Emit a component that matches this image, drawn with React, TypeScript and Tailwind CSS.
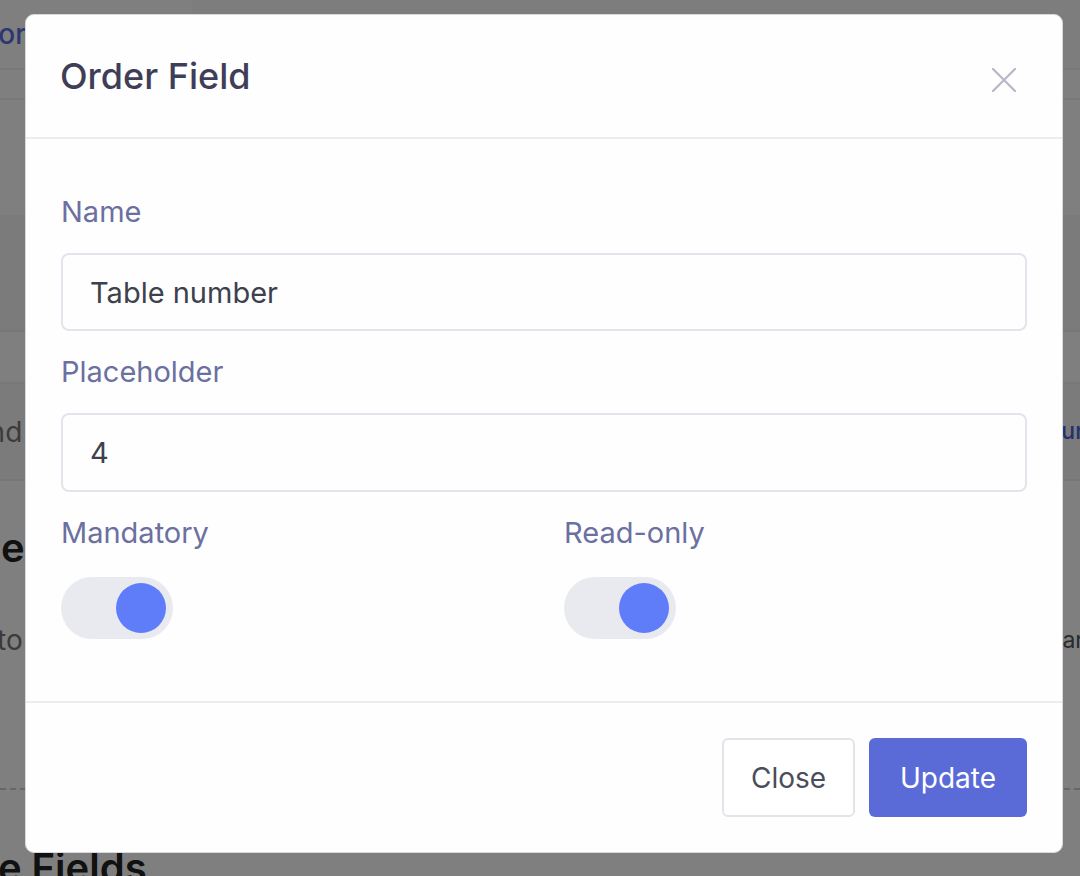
import React, { useState } from "react";

const font = "font-['Inter','Noto_Sans',sans-serif]";

interface ToggleProps {
  label: string;
  checked: boolean;
  onChange: (v: boolean) => void;
}

const Toggle: React.FC<ToggleProps> = ({ label, checked, onChange }) => {
  return (
    <div className="flex flex-col">
      <label className="text-[29px] leading-[42px] text-[#6b70a0]">{label}</label>
      <button
        type="button"
        onClick={() => onChange(!checked)}
        className={`mt-[23px] flex h-[62px] w-[112px] items-center rounded-full bg-[#e9eaf0] px-[7px] ${
          checked ? "justify-end" : "justify-start"
        }`}
      >
        <span className="block h-[50px] w-[50px] rounded-full bg-[#5f7cf9]" />
      </button>
    </div>
  );
};

// the page sitting behind the backdrop, only its edges show
const BackgroundPage: React.FC = () => {
  return (
    <div className="flex h-[876px] flex-col bg-white text-[#333]">
      <div className="flex h-[70px] border-b-2 border-[#f0f0f0] bg-[#fafafa]">
        <div className="flex w-[192px] items-center justify-end bg-white pr-[166px]">
          <span className="whitespace-nowrap text-[28px] font-medium text-[#5a6fe0]">Vendor</span>
        </div>
      </div>
      <div className="h-[30px] border-b-2 border-[#f0f0f0]" />
      <div className="h-[115px]" />
      <div className="h-[117px] border-b-2 border-[#eeeeee] bg-[#f6f6f6]" />
      <div className="h-[52px] border-b-2 border-[#f0f0f0]" />
      <div className="flex h-[97px] items-center justify-between border-b-2 border-[#eeeeee] bg-[#f6f6f6]">
        <span className="ml-[-56px] whitespace-nowrap text-[28px] text-[#777]">Brand</span>
        <span className="mr-[-9px] whitespace-nowrap text-[23px] font-medium text-[#4a5fd8]">Run</span>
      </div>
      <div className="flex h-[134px] items-center">
        <span className="ml-[-72px] whitespace-nowrap text-[40px] font-semibold text-[#222]">Time</span>
      </div>
      <div className="flex h-[50px] items-center justify-between">
        <span className="ml-[-3px] whitespace-nowrap text-[28px] text-[#777]">to</span>
        <span className="mr-[-4px] whitespace-nowrap text-[23px] text-[#555]">Ear</span>
      </div>
      <div className="h-[125px] border-b-2 border-dashed border-[#cfcfcf]" />
      <div className="flex flex-1 items-end">
        <span className="mb-[-22px] ml-[-84px] whitespace-nowrap text-[40px] font-semibold text-[#222]">
          Table Fields
        </span>
      </div>
    </div>
  );
};

export default function App() {
  const [name, setName] = useState("Table number");
  const [placeholder, setPlaceholder] = useState("4");
  const [mandatory, setMandatory] = useState(true);
  const [readOnly, setReadOnly] = useState(true);

  return (
    <div className={`relative h-[876px] w-[1080px] overflow-hidden ${font}`}>
      <BackgroundPage />

      {/* backdrop + dialog */}
      <div className="absolute inset-0 bg-black/50" />
      <div className="absolute inset-0 flex items-start pl-[25px] pt-[14px]">
        <div className="w-[1038px] overflow-hidden rounded-[9px] border border-[#d8d9df] bg-[#fefefe]">
          {/* Header */}
          <div className="flex h-[124px] items-center justify-between border-b-2 border-[#ebecf2] pl-[34px] pr-[46px]">
            <h2 className="text-[36px] font-medium leading-none text-[#403e57]">Order Field</h2>
            <button type="button" className="mt-[8px] text-[#b6b9c3]">
              <svg width="24" height="24" viewBox="0 0 24 24" fill="none">
                <path d="M1 1L23 23M23 1L1 23" stroke="currentColor" strokeWidth="2.2" strokeLinecap="round" />
              </svg>
            </button>
          </div>

          {/* Body */}
          <div className="flex flex-col px-[35px] pb-[62px] pt-[52px]">
            <label className="text-[29px] leading-[42px] text-[#6b70a0]">Name</label>
            <input
              value={name}
              onChange={(e) => setName(e.target.value)}
              className="mt-[20px] h-[78px] rounded-[8px] border-2 border-[#e3e4eb] px-[27px] text-[29px] text-[#3d414d] outline-none"
            />

            <label className="mt-[20px] text-[29px] leading-[42px] text-[#6b70a0]">Placeholder</label>
            <input
              value={placeholder}
              onChange={(e) => setPlaceholder(e.target.value)}
              className="mt-[20px] h-[79px] rounded-[8px] border-2 border-[#e3e4eb] px-[27px] text-[29px] text-[#3d414d] outline-none"
            />

            <div className="mt-[20px] grid grid-cols-2 gap-x-[40px]">
              <Toggle label="Mandatory" checked={mandatory} onChange={setMandatory} />
              <Toggle label="Read-only" checked={readOnly} onChange={setReadOnly} />
            </div>
          </div>

          {/* Footer */}
          <div className="flex justify-end gap-[14px] border-t-2 border-[#ebecf2] px-[35px] py-[35px]">
            <button
              type="button"
              className="h-[79px] w-[133px] rounded-[6px] border-2 border-[#e3e4ea] bg-white text-[28px] text-[#4a4d5a]"
            >
              Close
            </button>
            <button
              type="button"
              className="h-[79px] w-[158px] rounded-[6px] bg-[#5a6bd8] text-[28px] text-white"
            >
              Update
            </button>
          </div>
        </div>
      </div>
    </div>
  );
}
